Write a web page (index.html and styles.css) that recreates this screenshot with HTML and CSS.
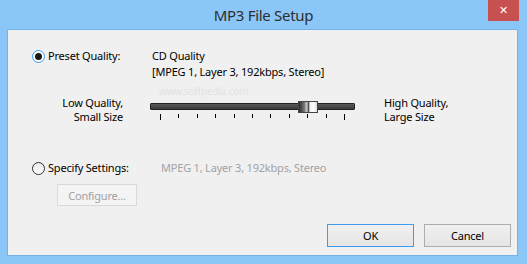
FILE: index.html
```html
<html>
  <head>
    <link rel="stylesheet" href="styles.css">
  </head>
  <body>
    <div class="window">
      <div class="titlebar">
        <span class="title">MP3 File Setup</span>
        <button class="close">&#x2715;</button>
      </div>
      <div class="client">
        <div class="row">
          <label class="opt">
            <span class="radio checked"></span>
            <span>Preset Quality:</span>
          </label>
          <div class="value">
            <div>CD Quality</div>
            <div>[MPEG 1, Layer 3, 192kbps, Stereo]</div>
          </div>
        </div>

        <div class="quality">
          <div class="q-left">Low Quality,<br>Small Size</div>
          <div class="slider">
            <div class="track"></div>
            <div class="thumb"></div>
            <div class="ticks">
              <i class="long"></i><i></i><i></i><i></i><i></i><i></i><i></i><i></i><i></i><i></i><i class="long"></i>
            </div>
            <div class="mark">www.softpedia.com</div>
          </div>
          <div class="q-right">High Quality,<br>Large Size</div>
        </div>

        <div class="row specify">
          <label class="opt wide">
            <span class="radio"></span>
            <span>Specify Settings:</span>
          </label>
          <div class="value muted">MPEG 1, Layer 3, 192kbps, Stereo</div>
        </div>

        <button class="btn disabled">Configure...</button>

        <div class="actions">
          <button class="btn default">OK</button>
          <button class="btn">Cancel</button>
        </div>
      </div>
    </div>
  </body>
</html>
```

FILE: styles.css
```css
body {
  margin: 0;
  background: #8ac7f8;
  font-family: "Noto Sans", "Open Sans", sans-serif;
  font-size: 11px;
  letter-spacing: -0.2px;
  color: #000;
}
.window {
  width: 527px;
  height: 264px;
  background: #8ac7f8;
}
.titlebar {
  position: relative;
  height: 29px;
  text-align: center;
}
.title {
  display: inline-block;
  padding-top: 5px;
  font-size: 15px;
  letter-spacing: -0.3px;
  color: #2e2e2e;
}
.close {
  position: absolute;
  top: 0;
  left: 488px;
  width: 31px;
  height: 21px;
  border: none;
  background: #c75050;
  color: #fff;
  font-size: 11px;
  font-weight: bold;
  padding: 0;
  font-family: "DejaVu Sans", sans-serif;
}
.client {
  margin-left: 7px;
  width: 511px;
  height: 227px;
  box-sizing: border-box;
  background: #f0f0f0;
  border: 1px solid #74b2ea;
  padding-top: 18px;
}
.row {
  display: flex;
  line-height: 16px;
}
.opt {
  display: flex;
  align-items: center;
  width: 120px;
  height: 16px;
  padding-left: 24px;
}
.opt.wide {
  width: 129px;
}
.radio {
  display: inline-block;
  box-sizing: border-box;
  width: 13px;
  height: 13px;
  margin-right: 3px;
  border-radius: 50%;
  border: 1px solid #333;
  background: linear-gradient(#e8e8e8, #fff);
  position: relative;
}
.radio.checked {
  border-color: #3c9cf5;
  background: #fff;
}
.radio.checked::after {
  content: "";
  position: absolute;
  left: 2px;
  top: 2px;
  width: 7px;
  height: 7px;
  border-radius: 50%;
  background: #1a1a1a;
}
.muted {
  color: #a3a3a3;
}
.quality {
  display: flex;
  margin-top: 16px;
  line-height: 14px;
}
.q-left {
  width: 115px;
  text-align: right;
}
.q-right {
  margin-left: 29px;
}
.slider {
  position: relative;
  width: 205px;
  height: 27px;
  margin-left: 27px;
}
.track {
  margin-top: 7px;
  height: 7px;
  box-sizing: border-box;
  background: linear-gradient(#5a5a5a, #3a3a3a);
  border: 1px solid #222;
  border-radius: 1px;
}
.thumb {
  position: absolute;
  left: 148px;
  top: 5px;
  width: 20px;
  height: 12px;
  box-sizing: border-box;
  border: 1px solid #444;
  background: linear-gradient(to right, #2c2c2c, #777 30%, #d8d8d8 45%, #4a4a4a 50%, #555 55%, #eee 60%, #fff 80%, #ddd);
}
.ticks {
  display: flex;
  justify-content: space-between;
  align-items: flex-start;
  margin-top: 4px;
  padding: 0 10px 0 10px;
}
.ticks i {
  width: 1px;
  height: 4px;
  background: #000;
}
.ticks i.long {
  height: 6px;
}
.mark {
  position: absolute;
  left: 9px;
  top: -11px;
  font-size: 10px;
  line-height: 12px;
  color: #e2e2e2;
}
.specify {
  margin-top: 36px;
}
.btn {
  font-family: inherit;
  font-size: 11px;
  letter-spacing: -0.2px;
  box-sizing: border-box;
  height: 23px;
  width: 87px;
  padding: 0;
  border: 1px solid #adadad;
  background: linear-gradient(#f0f0f0, #e5e5e5);
  color: #000;
}
.btn.disabled {
  display: block;
  width: 80px;
  height: 22px;
  margin: 8px 0 0 49px;
  border-color: #d9d9d9;
  background: #f4f4f4;
  color: #a0a0a0;
}
.btn.default {
  border-color: #3c9cf0;
}
.actions {
  display: flex;
  justify-content: flex-end;
  gap: 10px;
  margin-top: 18px;
  padding-right: 6px;
}
```
